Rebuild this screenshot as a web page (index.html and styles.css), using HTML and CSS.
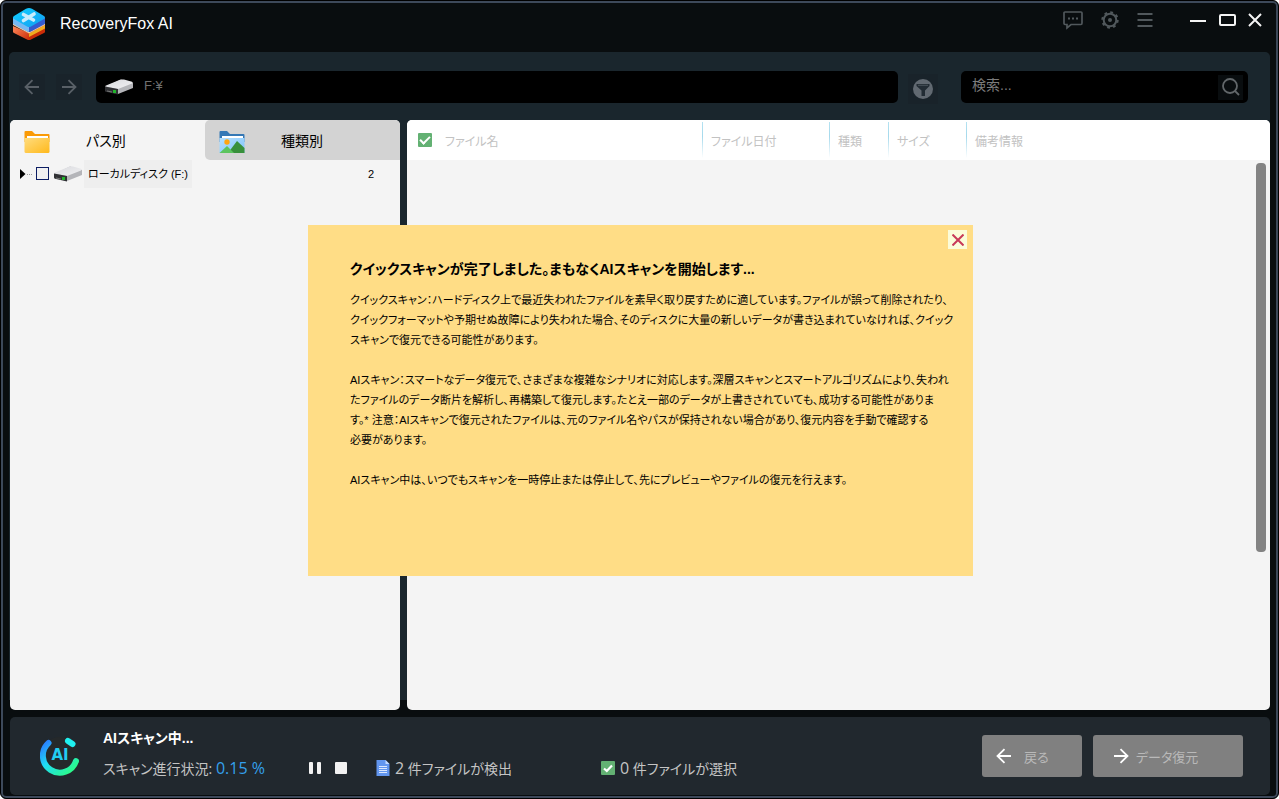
FILE: index.html
```html
<!DOCTYPE html>
<html lang="ja">
<head>
  <meta charset="UTF-8" />
  <meta name="viewport" content="width=device-width, initial-scale=1.0" />
  <title>RecoveryFox AI</title>
  <link rel="stylesheet" href="styles.css">
</head>
<body>
  <!-- 共通アイコン -->
  <svg class="defs" aria-hidden="true">
    <defs>
      <linearGradient id="diskTop" x1="0" y1="0" x2="1" y2="1"><stop offset="0" stop-color="#d9dade"/><stop offset="1" stop-color="#f1f1f3"/></linearGradient>
      <linearGradient id="folderFill" x1="0" y1="0" x2="1" y2="1"><stop offset="0" stop-color="#ffdc7e"/><stop offset="1" stop-color="#ffb91c"/></linearGradient>
      <linearGradient id="photoFill" x1="0" y1="0" x2="1" y2="1"><stop offset="0" stop-color="#b5e0ff"/><stop offset="1" stop-color="#7fc3fa"/></linearGradient>
      <linearGradient id="cubeTop" x1="0" y1="0" x2="1" y2="1"><stop offset="0" stop-color="#10d0ff"/><stop offset="1" stop-color="#139df2"/></linearGradient>
      <linearGradient id="cubeRed" x1="0" y1="0" x2="1" y2="1"><stop offset="0" stop-color="#ff8a5c"/><stop offset="1" stop-color="#c92c08"/></linearGradient>
      <linearGradient id="aiRing" x1="0" y1="0" x2="1" y2="1"><stop offset="0" stop-color="#2a7bff"/><stop offset="0.4" stop-color="#1fdcf5"/><stop offset="1" stop-color="#2dff7a"/></linearGradient>
      <symbol id="disk" viewBox="0 0 30 16">
        <path d="M1 8 L17 0.5 L29 4 L29 9 L14 15 L1 12 Z" fill="#b4b5b9"/>
        <path d="M1 7.5 Q1 7 2 6.6 L16 0.8 Q18 0.2 20 0.6 L28 2.8 Q29.500 3.500 28 4.500 L14 10 Z" fill="url(#diskTop)"/>
        <path d="M1 7.500 L14 10 L14 15.500 L2 12.800 Q1 12.500 1 11.500 Z" fill="#303134"/>
        <path d="M3 12 L8 13" stroke="#777" stroke-width="1"/>
        <rect x="9" y="11" width="3" height="3" fill="#22b52c"/>
      </symbol>
      <symbol id="check" viewBox="0 0 14 14">
        <rect width="14" height="14" rx="1" fill="#63b173"/>
        <path d="M3 7.500 L5.800 10 L11 4.500" fill="none" stroke="#fff" stroke-width="2.200"/>
      </symbol>
      <symbol id="arrow" viewBox="0 0 16 16">
        <path d="M15 8 H2 M8.500 1.200 L1.500 8 L8.500 14.800" fill="none" stroke="currentColor" stroke-width="1.800"/>
      </symbol>
    </defs>
  </svg>

  <div class="window">
    <header class="titlebar">
      <svg class="logo" viewBox="0 0 32 32">
        <path d="M0 18 L16 25 V32 Q15 32 14 31.500 L1 25 Q0 24.500 0 23.500 Z" fill="url(#cubeRed)"/>
        <path d="M32 16 L16 25 V32 Q17 32 18 31.500 L31 25 Q32 24.500 32 23.500 Z" fill="#c92c08"/>
        <path d="M32 17 L16 25.500 V29 L32 20.500 Z" fill="#f1ac1e"/>
        <path d="M0 15 L16 24 L32 15 V17 L16 25.500 L0 17 Z" fill="#f6c9a0"/>
        <path d="M0 9.500 L16 18 V24 L14 23.500 L1 16.500 Q0 16 0 15 Z" fill="#75b9f4"/>
        <path d="M32 9.500 L16 18 V24 L18 23.500 L31 16.500 Q32 16 32 15 Z" fill="#335bd0"/>
        <path d="M0 9.500 Q0 8.500 1 8 L13 0.800 Q16 -0.800 19 0.800 L31 8 Q32 8.500 32 9.500 Q32 10.500 31 11 L18 18.500 Q16 19.500 14 18.500 L1 11 Q0 10.500 0 9.500 Z" fill="url(#cubeTop)"/>
        <path d="M10.500 6.500 L20.500 12 M21 6 L10.500 12.500" stroke="#c8ecfc" stroke-width="3.600" stroke-linecap="round"/>
      </svg>
      <h1 class="app-name">RecoveryFox AI</h1>
      <div class="tools">
        <button class="icon-btn" aria-label="フィードバック">
          <svg width="20" height="20" viewBox="0 0 20 20" fill="none" stroke="currentColor" stroke-width="1.700"><path d="M2 2 H18 Q19 2 19 3 V13 Q19 14.500 18 14.500 H8 L4 18 V14.500 H2 Q1 14.500 1 13 V3 Q1 2 2 2 Z"/><path d="M5 8.500 h2 M9 8.500 h2 M13 8.500 h2" stroke-width="2"/></svg>
        </button>
        <button class="icon-btn" aria-label="設定">
          <svg width="18" height="18" viewBox="0 0 18 18" fill="none" stroke="currentColor"><circle cx="9" cy="9" r="6.300" stroke-width="2"/><circle cx="9" cy="9" r="7.700" stroke-width="2" stroke-dasharray="2.800 3.250"/><circle cx="9" cy="9" r="2" fill="currentColor" stroke="none"/></svg>
        </button>
        <button class="icon-btn" aria-label="メニュー">
          <svg width="16" height="16" viewBox="0 0 16 16" stroke="currentColor" stroke-width="1.800"><path d="M0.500 2 H15.500 M0.500 8 H15.500 M0.500 14 H15.500"/></svg>
        </button>
      </div>
      <div class="win-controls">
        <button class="icon-btn" aria-label="最小化">
          <svg width="18" height="16" viewBox="0 0 18 16" stroke="currentColor" stroke-width="2"><path d="M1 9 H17"/></svg>
        </button>
        <button class="icon-btn" aria-label="最大化">
          <svg width="18" height="16" viewBox="0 0 18 16" fill="none" stroke="currentColor" stroke-width="2"><rect x="2" y="3" width="15" height="10" rx="1"/></svg>
        </button>
        <button class="icon-btn" aria-label="閉じる">
          <svg width="16" height="16" viewBox="0 0 16 16" stroke="currentColor" stroke-width="2"><path d="M2 2 L14 14 M14 2 L2 14"/></svg>
        </button>
      </div>
    </header>

    <main class="main">
      <div class="toolbar">
        <button class="nav-btn" aria-label="戻る"><svg width="16" height="16"><use href="#arrow"/></svg></button>
        <button class="nav-btn" aria-label="進む"><svg class="flip" width="16" height="16"><use href="#arrow"/></svg></button>
        <label class="path-box">
          <svg width="30" height="16"><use href="#disk"/></svg>
          <input class="field path-field" type="text" value="F:¥" aria-label="パス">
        </label>
        <button class="nav-btn filter-btn" aria-label="フィルター">
          <svg width="20" height="20" viewBox="0 0 20 20"><circle cx="10" cy="10" r="10" fill="#616971"/><path d="M3.500 5 H16.500 V7 L12 11.500 V17 H8.500 V11.500 L3.500 7 Z" fill="#222c34"/><path d="M5 6.300 H15" stroke="#4a545c" stroke-width="1"/></svg>
        </button>
        <div class="search-box">
          <input class="field search-field" type="text" placeholder="検索..." aria-label="検索">
          <button class="search-btn" aria-label="検索する">
            <svg width="18" height="18" viewBox="0 0 18 18" fill="none" stroke="currentColor" stroke-width="1.800"><circle cx="8" cy="8" r="7"/><path d="M13 13 L17 17"/></svg>
          </button>
        </div>
      </div>

      <div class="panels">
        <aside class="tree-panel">
          <div class="tabs">
            <button class="tab active">
              <svg width="26" height="24" viewBox="0 0 26 24"><path d="M0.500 2 Q0.500 1 1.500 1 H8 L11 4 H24.500 Q25.500 4 25.500 5 V12 H0.500 Z" fill="#fa9a06"/><rect x="3" y="6" width="21" height="4" fill="#fff"/><path d="M0.500 8 H25.500 V21.500 Q25.500 23 24 23 H2 Q0.500 23 0.500 21.500 Z" fill="url(#folderFill)"/></svg>
              <span>パス別</span>
            </button>
            <button class="tab">
              <svg width="26" height="24" viewBox="0 0 26 24"><path d="M0.500 2 Q0.500 1 1.500 1 H8 L11 4 H24.500 Q25.500 4 25.500 5 V12 H0.500 Z" fill="#3578b5"/><rect x="3" y="6" width="21" height="4" fill="#fff"/><path d="M0.500 8 H25.500 V23 H0.500 Z" fill="url(#photoFill)"/><circle cx="8" cy="12" r="2.700" fill="#ffa510"/><path d="M9 23 L18 11 L25.500 18 V23 Z" fill="#38903b"/><path d="M0.500 23 L8 16 L15 23 Z" fill="#5cc45e"/></svg>
              <span>種類別</span>
            </button>
          </div>
          <div class="tree-row">
            <svg class="expander" width="16" height="12" viewBox="0 0 16 12"><path d="M0 1 L5.500 6 L0 11 Z" fill="#000"/><path d="M7 6.500 H13" stroke="#999" stroke-dasharray="1 1"/></svg>
            <input class="tree-check" type="checkbox" id="diskF">
            <svg width="30" height="16"><use href="#disk"/></svg>
            <label class="tree-label" for="diskF">ローカルディスク (F:)</label>
            <span class="tree-count">2</span>
          </div>
        </aside>

        <section class="list-panel">
          <table class="file-table">
            <thead>
              <tr>
                <th class="col-name">
                  <div class="name-head">
                    <input class="green-check" type="checkbox" id="checkAll" checked>
                    <label for="checkAll">ファイル名</label>
                  </div>
                </th>
                <th class="col-date">ファイル日付</th>
                <th class="col-type">種類</th>
                <th class="col-size">サイズ</th>
                <th>備考情報</th>
              </tr>
            </thead>
          </table>
          <div class="list-body"><div class="scroll-thumb"></div></div>
        </section>
      </div>
    </main>

    <footer class="status">
      <svg class="ai-mark" width="40" height="40" viewBox="0 0 40 40">
        <circle cx="20" cy="20" r="19" fill="#25292b"/>
        <path d="M8.500 7 A17 17 0 1 0 36 25" fill="none" stroke="url(#aiRing)" stroke-width="6" stroke-linecap="round"/>
        <path d="M28 5 L32.500 8" stroke="#20f0ef" stroke-width="6" stroke-linecap="round"/>
        <text x="20" y="24" text-anchor="middle" class="ai-text">AI</text>
      </svg>
      <div class="progress">
        <div class="scan-title">AIスキャン中...</div>
        <div class="scan-line">
          <div class="scan-state">スキャン進行状況: <span class="percent">0.15 %</span></div>
          <div class="scan-buttons">
            <button class="icon-btn" aria-label="一時停止"><svg width="14" height="12" viewBox="0 0 14 12" fill="#f2f2f2"><rect x="1" width="4" height="12" rx="1"/><rect x="9" width="4" height="12" rx="1"/></svg></button>
            <button class="icon-btn" aria-label="停止"><svg width="12" height="12" viewBox="0 0 12 12"><rect width="12" height="12" rx="1" fill="#f2f2f2"/></svg></button>
          </div>
          <div class="found">
            <svg width="14" height="16" viewBox="0 0 14 16"><path d="M0.500 0 H9.500 L13.500 4 V16 H0.500 Z" fill="#6296ef"/><path d="M9.500 0 V4 H13.500 Z" fill="#c5dbff"/><path d="M3 6.500 H11 M3 8.500 H11 M3 10.500 H11 M3 12.500 H11" stroke="#dbe8ff"/></svg>
            <span><span class="count">2</span> 件ファイルが検出</span>
          </div>
          <div class="selected">
            <svg width="14" height="14"><use href="#check"/></svg>
            <span><span class="count">0</span> 件ファイルが選択</span>
          </div>
        </div>
      </div>
      <div class="actions">
        <button class="action back"><svg width="16" height="16"><use href="#arrow"/></svg>戻る</button>
        <button class="action recover"><svg class="flip" width="16" height="16"><use href="#arrow"/></svg>データ復元</button>
      </div>
    </footer>
  </div>

  <div class="overlay">
    <div class="notice" role="dialog" aria-labelledby="noticeTitle">
      <button class="notice-close" aria-label="閉じる">
        <svg width="12" height="12" viewBox="0 0 12 12" stroke="#c83a58" stroke-width="2"><path d="M0.500 0.500 L11.500 11.500 M11.500 0.500 L0.500 11.500"/></svg>
      </button>
      <h2 id="noticeTitle">クイックスキャンが完了しました。まもなくAIスキャンを開始します...</h2>
      <p>クイックスキャン：ハードディスク上で最近失われたファイルを素早く取り戻すために適しています。ファイルが誤って削除されたり、<br>クイックフォーマットや予期せぬ故障により失われた場合、そのディスクに大量の新しいデータが書き込まれていなければ、クイック<br>スキャンで復元できる可能性があります。</p>
      <p>AIスキャン：スマートなデータ復元で、さまざまな複雑なシナリオに対応します。深層スキャンとスマートアルゴリズムにより、失われ<br>たファイルのデータ断片を解析し、再構築して復元します。たとえ一部のデータが上書きされていても、成功する可能性がありま<br>す。* 注意：AIスキャンで復元されたファイルは、元のファイル名やパスが保持されない場合があり、復元内容を手動で確認する<br>必要があります。</p>
      <p>AIスキャン中は、いつでもスキャンを一時停止または停止して、先にプレビューやファイルの復元を行えます。</p>
    </div>
  </div>
</body>
</html>
```
FILE: styles.css
```css
* {
  box-sizing: border-box;
}
html, body {
  height: 100%;
  margin: 0;
}
body, button, input {
  font-family: "Liberation Sans", "Noto Sans CJK JP", sans-serif;
  font-feature-settings: "palt";
}
body {
  background: #fff;
  font-size: 12px;
}
button {
  border: none;
  padding: 0;
  background: none;
  color: inherit;
}
svg {
  display: block;
  flex: none;
}
.defs {
  position: absolute;
  width: 0;
  height: 0;
}
.flip {
  transform: scaleX(-1);
}

/* ウィンドウ枠 */
.window {
  display: flex;
  flex-direction: column;
  height: 100%;
  padding: 0 6px;
  background: #090d0f;
  border: 1px solid #000;
  border-radius: 6px;
  box-shadow: inset 0 0 0 2px #3d495a;
}
.titlebar {
  display: flex;
  align-items: flex-start;
  height: 51px;
  padding: 7px 9px 0 6px;
}
.logo {
  width: 32px;
  height: 32px;
}
.app-name {
  flex: 1;
  margin: 6px 0 0 15px;
  color: #fff;
  font-size: 16px;
  line-height: 20px;
  font-weight: normal;
}
.tools, .win-controls {
  display: flex;
  align-items: center;
  height: 24px;
}
.tools {
  gap: 18px;
  margin-right: 36px;
  color: #51585c;
}
.win-controls {
  gap: 11px;
  color: #f4f4f4;
}

.main {
  flex: 1;
  display: flex;
  flex-direction: column;
  margin: 0 2px;
  background: linear-gradient(#1a262d 0, #1a262d 648px, #090d0f 648px);
  border-radius: 5px 5px 0 0;
}
.toolbar {
  display: flex;
  align-items: center;
  height: 68px;
  padding: 2px 22px 0 10px;
}
.nav-btn {
  display: grid;
  place-items: center;
  width: 26px;
  height: 26px;
  margin-right: 11px;
  background: #19232a;
  color: #596067;
}
.path-box, .search-box {
  display: flex;
  align-items: center;
  height: 32px;
  background: #000;
  border-radius: 5px;
}
.path-box {
  flex: 1;
  margin-left: 3px;
  padding-left: 8px;
}
.field {
  flex: 1;
  min-width: 0;
  height: 28px;
  padding: 0 0 4px;
  border: none;
  outline: none;
  background: transparent;
  color: #707070;
}
.path-field {
  margin-left: 10px;
  font-size: 13px;
}
.filter-btn {
  width: 30px;
  height: 30px;
  margin: 4px 23px 0 10px;
}
.search-box {
  width: 287px;
  padding: 0 5px 0 11px;
}
.search-field {
  font-size: 14px;
}
.search-field::placeholder {
  color: #7c7c7c;
}
.search-btn {
  display: grid;
  place-items: center;
  width: 25px;
  height: 25px;
  background: #090d0f;
  color: #62676a;
}

/* 左右パネル */
.panels {
  flex: 1;
  display: flex;
  gap: 7px;
  padding-left: 1px;
}
.tree-panel, .list-panel {
  background: #f4f4f4;
  border-radius: 5px;
  overflow: hidden;
}
.tree-panel {
  width: 390px;
}
.tabs {
  display: flex;
}
.tab {
  flex: 1;
  display: flex;
  align-items: center;
  gap: 36px;
  height: 40px;
  padding-left: 14px;
  background: #d3d3d3;
  border-radius: 5px 0 0 5px;
  font-size: 14px;
}
.tab svg {
  margin-top: 4px;
}
.tab.active {
  background: #f4f4f4;
}
.tree-row {
  display: flex;
  align-items: center;
  height: 28px;
  padding: 0 26px 0 10px;
}
.tree-check {
  appearance: none;
  width: 13px;
  height: 13px;
  margin: -2px 4px 0 0;
  border: 1px solid #0c1d63;
  background: #f0f0f0;
}
.tree-label {
  margin-left: 1px;
  padding: 0 4px;
  background: #eee;
  font-size: 11px;
  line-height: 28px;
}
.tree-count {
  margin-left: auto;
  font-size: 11px;
}

.list-panel {
  flex: 1;
  display: flex;
  flex-direction: column;
}
.file-table {
  width: 100%;
  table-layout: fixed;
  border-collapse: collapse;
  background: #fff;
}
.file-table th {
  height: 40px;
  padding: 0 0 0 9px;
  color: #c2c2c2;
  font-weight: normal;
  text-align: left;
  background: linear-gradient(#b4e2f1, #a5d9ec 40%, #fff) no-repeat 0 2px / 1px 36px;
}
.file-table .col-name {
  width: 295px;
  padding-left: 11px;
  background: none;
}
.col-date {
  width: 127px;
}
.col-type {
  width: 59px;
}
.col-size {
  width: 78px;
}
.name-head {
  display: flex;
  align-items: center;
  gap: 13px;
}
.green-check {
  appearance: none;
  display: grid;
  place-items: center;
  width: 14px;
  height: 14px;
  margin: 0;
  border-radius: 1px;
  background: #63b173;
}
.green-check:checked::before {
  content: "";
  width: 8px;
  height: 4px;
  margin-bottom: 2px;
  border: solid #fff;
  border-width: 0 0 2px 2px;
  transform: rotate(-45deg);
}
.list-body {
  flex: 1;
  display: flex;
  justify-content: flex-end;
  padding: 3px 4px 0 0;
}
.scroll-thumb {
  width: 10px;
  height: 389px;
  background: #838383;
  border-radius: 4px;
}

/* 下部ステータス */
.status {
  display: flex;
  align-items: center;
  height: 78px;
  margin: 7px 2px 3px 3px;
  padding: 0 27px 0 30px;
  background: #21282e;
  border-radius: 5px;
}
.ai-text {
  fill: #22cdf2;
  font: bold 15px "DejaVu Sans", sans-serif;
}
.progress {
  flex: 1;
  margin: 0 0 4px 23px;
}
.scan-title {
  color: #fff;
  font-size: 14px;
  line-height: 20px;
  font-weight: bold;
}
.scan-line {
  display: flex;
  align-items: center;
  margin-top: 8px;
  color: #c4c4c4;
  font-family: "Open Sans", "Noto Sans CJK JP", sans-serif;
  font-size: 14px;
  line-height: 24px;
}
.scan-state {
  width: 205px;
  white-space: nowrap;
}
.percent, .count {
  font-size: 16px;
}
.percent {
  color: #34a0ec;
}
.scan-buttons, .found, .selected {
  display: flex;
  align-items: center;
}
.scan-buttons {
  gap: 13px;
  width: 68px;
}
.found, .selected {
  gap: 5px;
}
.found {
  width: 225px;
}
.actions {
  display: flex;
  gap: 11px;
}
.action {
  display: flex;
  align-items: center;
  height: 42px;
  background: #808080;
  border-radius: 3px;
  color: #b9b9b9;
  font-size: 13px;
}
.action svg {
  color: #fff;
}
.back {
  gap: 12px;
  width: 100px;
  padding-left: 14px;
}
.recover {
  gap: 7px;
  width: 150px;
  padding-left: 20px;
}

/* お知らせダイアログ */
.overlay {
  position: fixed;
  inset: 0;
  display: grid;
  place-items: center;
  padding: 2px 0 0 2px;
}
.notice {
  position: relative;
  width: 665px;
  min-height: 351px;
  padding: 34px 42px 24px;
  background: #ffdd86;
  color: #000;
}
.notice-close {
  position: absolute;
  top: 5px;
  right: 6px;
  display: grid;
  place-items: center;
  width: 19px;
  height: 19px;
  background: #fbfcd9;
}
.notice h2 {
  margin: 0 0 11px;
  font-size: 14px;
  line-height: 20px;
}
.notice p {
  margin: 0 0 20px;
  font-size: 11px;
  line-height: 20px;
  white-space: nowrap;
}
```
